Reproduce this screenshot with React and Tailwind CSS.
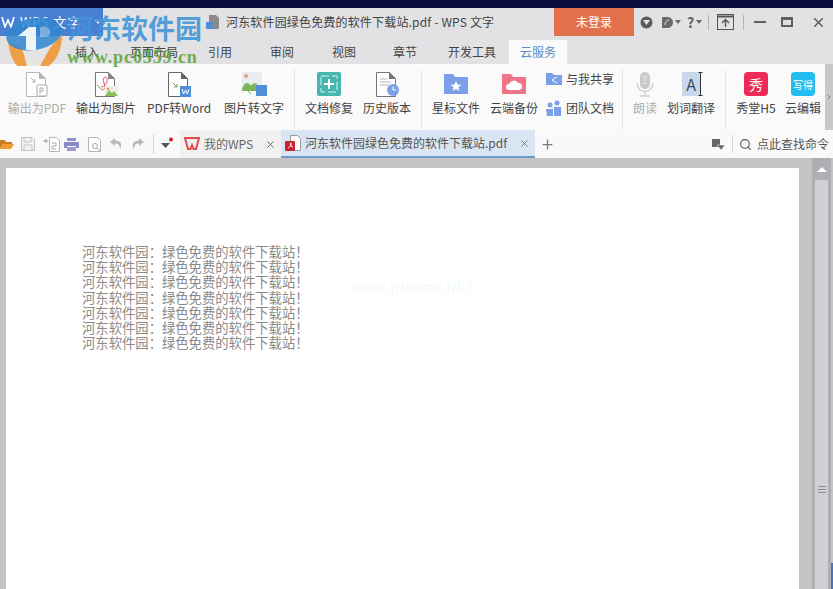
import React from 'react';
import { X, Plus, Search, ChevronRight } from 'lucide-react';

const cjk = { fontFamily: '"Noto Sans CJK SC", "Noto Sans", sans-serif' };

const DocBase = ({ stroke = '#8a8a8a', fold = '#8a8a8a' }) => (
    <>
        <path d="M3.5 1.5h13l6 6v18h-19z" fill="#fff" stroke={stroke} />
        <path d="M16 1l7 7h-7z" fill={fold} />
    </>
);

const WBadge = ({ x = 15, y = 15 }) => (
    <g>
        <rect x={x} y={y} width="11" height="11" fill="#4f8fd8" />
        <path d={`M${x + 2} ${y + 3}l1.6 5 1.9-4 1.9 4 1.6-5`} fill="none" stroke="#fff" strokeWidth="1" />
    </g>
);

const ToPdf = () => (
    <svg width="28" height="26" viewBox="0 0 28 26">
        <DocBase stroke="#b5b5b5" fold="#b5b5b5" />
        <path d="M8 7l4 4m0-3v3H9" stroke="#b0b0b0" fill="none" />
        <rect x="14" y="14" width="10" height="11" rx="1" fill="#fff" stroke="#aaa" />
        <path d="M17 23v-6h3v3h-3" fill="none" stroke="#aaa" />
    </svg>
);

const ToImage = () => (
    <svg width="28" height="26" viewBox="0 0 28 26">
        <DocBase stroke="#777" fold="#888" />
        <path d="M9 16c3 0 7-4 6-8s-5-2-3 4 1 6-3 7" fill="none" stroke="#d9546c" />
        <path d="M5 14l4 4" stroke="#6aa84f" />
        <rect x="13" y="15" width="13" height="10" fill="#e9f2e0" />
        <path d="M13 25l4-6 3 3 2-2 4 5z" fill="#8cbf5a" />
        <circle cx="16" cy="18" r="1.3" fill="#e8a05c" />
    </svg>
);

const ToWord = () => (
    <svg width="28" height="26" viewBox="0 0 28 26">
        <DocBase stroke="#666" fold="#666" />
        <path d="M8 12l4 4m0-3v3H9" stroke="#6aa84f" fill="none" />
        <WBadge />
    </svg>
);

const ImgToText = () => (
    <svg width="30" height="26" viewBox="0 0 30 26">
        <rect x="3" y="1" width="20" height="19" fill="#e8eef0" />
        <circle cx="7" cy="5" r="2" fill="#e39a80" />
        <path d="M3 18c2-7 6-8 9-3 2-4 6-4 9 2v3H3z" fill="#7fb55a" />
        <path d="M8 19l4 4" stroke="#6aa84f" />
        <WBadge x="17" y="14" />
    </svg>
);

const Repair = () => (
    <svg width="26" height="26" viewBox="0 0 26 26">
        <rect x="1" y="1" width="24" height="24" rx="2" fill="#46b7ac" />
        <rect x="5" y="5" width="16" height="16" fill="none" stroke="#d9f3f0" strokeDasharray="8 3" />
        <path d="M13 8v10M8 13h10" stroke="#fff" strokeWidth="2" />
    </svg>
);

const History = () => (
    <svg width="28" height="26" viewBox="0 0 28 26">
        <DocBase stroke="#777" fold="#777" />
        <path d="M7 8h7M7 11h11M7 14h9" stroke="#b5b5b5" />
        <circle cx="20" cy="19" r="6" fill="#7f9fe6" />
        <path d="M20 15.5V19h3" stroke="#fff" fill="none" />
    </svg>
);

const Folder = ({ color, children }) => (
    <svg width="26" height="24" viewBox="0 0 26 24">
        <path d="M1 2h9l2 3h13v17H1z" fill={color} />
        {children}
    </svg>
);

const Mic = () => (
    <svg width="20" height="26" viewBox="0 0 20 26">
        <rect x="5" y="1" width="10" height="17" rx="5" fill="#c9c9c9" />
        <path d="M8 6h4M8 9h4M8 12h4" stroke="#eee" />
        <path d="M2 12c0 11 16 11 16 0M10 20v4M5 25h10" fill="none" stroke="#cfcfcf" strokeWidth="1.5" />
    </svg>
);

const Translate = () => (
    <div className="relative flex h-6 w-[18px] items-center justify-center bg-[#c9d7ea] text-[16px] text-[#3d4a5c]">
        A
        <svg className="absolute -right-[3px] top-0" width="5" height="24" viewBox="0 0 5 24">
            <path d="M0.5 0.5h4M2.5 0.5v23M0.5 23.5h4" stroke="#333" fill="none" />
        </svg>
    </div>
);

const Tile = ({ bg, className, children }) => (
    <div className={`flex h-6 w-6 items-center justify-center rounded-sm text-white ${bg} ${className}`}>{children}</div>
);

const Tool = ({ w, label, muted, icon }) => (
    <div className={`flex shrink-0 flex-col items-center ${w}`}>
        <div className="flex h-[28px] items-center justify-center">{icon}</div>
        <span className={`mt-[2px] whitespace-nowrap text-[12px] leading-4 ${muted ? 'text-[#ababab]' : 'text-[#444]'}`}>
            {label}
        </span>
    </div>
);

const Sep = () => <div className="mt-[4px] h-[59px] w-px shrink-0 bg-[#e2e2e2]" />;

const Bar = () => <div className="h-[15px] w-px bg-[#b4b4b4]" />;

const menu = [
    { label: '插入', w: 'w-[62px]' },
    { label: '页面布局', w: 'w-[72px]' },
    { label: '引用', w: 'w-[60px]' },
    { label: '审阅', w: 'w-[64px]' },
    { label: '视图', w: 'w-[60px]' },
    { label: '章节', w: 'w-[62px]' },
    { label: '开发工具', w: 'w-[72px]' },
];

const lines = Array.from({ length: 7 });

function TitleBar() {
    return (
        <div className="flex h-7 items-center bg-[#e2e2e4]">
            <div className="flex h-full w-[103px] shrink-0 items-center bg-[#4a80d2] text-[13px] text-white">
                <svg className="ml-[1px]" width="14" height="12" viewBox="0 0 14 12">
                    <path d="M1 1l3 10 3-7 3 7 3-10" fill="none" stroke="#fff" strokeWidth="1.6" />
                </svg>
                <span className="ml-[5px] tracking-[0.8px]">WPS 文字</span>
                <svg className="ml-[14px]" width="6" height="4" viewBox="0 0 6 4"><path d="M0 0h6L3 4z" fill="#fff" /></svg>
            </div>
            <svg className="ml-[103px] shrink-0" width="14" height="16" viewBox="0 0 14 16">
                <path d="M3 1h7l3 3v11H3z" fill="#8a8a8a" />
                <rect x="0" y="8" width="7" height="7" fill="#4f8fd8" />
            </svg>
            <span className="ml-[6px] w-[328px] shrink-0 whitespace-nowrap text-[12px] tracking-[0.17px] text-[#444]">
                河东软件园绿色免费的软件下载站.pdf - WPS 文字
            </span>
            <div className="flex h-full w-[80px] shrink-0 items-center justify-center bg-[#e2704c] text-[12px] text-white">
                未登录
            </div>
            <div className="flex flex-1 items-center text-[#606060]">
                <svg className="ml-[6px]" width="13" height="13" viewBox="0 0 13 13">
                    <circle cx="6.5" cy="6.5" r="6" fill="#5a5a5a" />
                    <path d="M3 4l3.5 5L10 4z" fill="#e2e2e4" />
                </svg>
                <svg className="ml-[8px]" width="13" height="13" viewBox="0 0 13 13">
                    <path d="M1 1h5c8 0 8 11 0 11H1z" fill="#6a6a6a" />
                    <path d="M4 9c0-3 2-5 4-5" stroke="#e2e2e4" fill="none" />
                </svg>
                <svg className="ml-[1px]" width="7" height="4" viewBox="0 0 7 4"><path d="M0 0h6L3 4z" fill="#6a6a6a" /></svg>
                <span className="ml-[5px] text-[14px] font-semibold leading-none">?</span>
                <svg className="ml-[2px]" width="7" height="4" viewBox="0 0 7 4"><path d="M0 0h6L3 4z" fill="#6a6a6a" /></svg>
                <div className="ml-[5px]"><Bar /></div>
                <svg className="ml-[8px]" width="17" height="16" viewBox="0 0 17 16">
                    <rect x="0.5" y="0.5" width="16" height="15" fill="none" stroke="#555" />
                    <path d="M1 2.5h15" stroke="#555" strokeWidth="2" />
                    <path d="M8.5 13V6M5 9l3.5-3.5L12 9" fill="none" stroke="#555" strokeWidth="1.4" />
                </svg>
                <div className="ml-[9px]"><Bar /></div>
                <div className="ml-[10px] h-[2px] w-[12px] bg-[#606060]" />
                <div className="ml-[15px] h-[10px] w-[12px] border-2 border-t-[3px] border-[#606060]" />
                <X className="ml-[18px] h-[15px] w-[15px]" strokeWidth={2.5} />
            </div>
        </div>
    );
}

function MenuRow() {
    return (
        <div className="flex h-7 items-end bg-[#e2e2e4] pl-[56px] text-[12px] text-[#444]">
            {menu.map((m) => (
                <div key={m.label} className={`flex h-6 shrink-0 items-center justify-center ${m.w}`}>{m.label}</div>
            ))}
            <div className="ml-[1px] flex h-6 w-[58px] items-center justify-center bg-[#fafafa] text-[#5c8fbf]">云服务</div>
        </div>
    );
}

function Ribbon() {
    return (
        <div className="flex h-[66px] bg-[#fafafa] pl-[2px] pt-[2px]">
            <div className="flex pt-[4px]">
                <Tool w="w-[70px]" label="输出为PDF" muted icon={<ToPdf />} />
                <Tool w="w-[68px]" label="输出为图片" icon={<ToImage />} />
                <Tool w="w-[78px]" label="PDF转Word" icon={<ToWord />} />
                <Tool w="w-[72px]" label="图片转文字" icon={<ImgToText />} />
            </div>
            <div className="w-[4px]" />
            <Sep />
            <div className="flex pl-[5px] pt-[4px]">
                <Tool w="w-[58px]" label="文档修复" icon={<Repair />} />
                <Tool w="w-[58px]" label="历史版本" icon={<History />} />
            </div>
            <div className="w-[5px]" />
            <Sep />
            <div className="flex pl-[5px] pt-[4px]">
                <Tool w="w-[58px]" label="星标文件" icon={<Folder color="#7b9fe8"><path d="M13 9l1.6 3.4 3.6.4-2.7 2.5.8 3.700-3.300-1.900-3.300 1.900.8-3.700-2.700-2.500 3.600-.4z" fill="#fff" /></Folder>} />
                <Tool w="w-[58px]" label="云端备份" icon={<Folder color="#ee7488"><path d="M8 18a3 3 0 010-6 5 5 0 019-1 3.500 3.500 0 011 7z" fill="#fff" /></Folder>} />
            </div>
            <div className="ml-[3px] flex w-[74px] shrink-0 flex-col gap-[13px] pt-[5px] text-[12px] leading-4 text-[#444]">
                <div className="flex items-center gap-[4px]">
                    <svg width="16" height="14" viewBox="0 0 16 14">
                        <path d="M0 1h6l2 2h8v10H0z" fill="#7b9fe8" />
                        <path d="M11 5L6 8l5 3" stroke="#fff" fill="none" />
                    </svg>
                    <span>与我共享</span>
                </div>
                <div className="flex items-center gap-[4px]">
                    <svg width="16" height="16" viewBox="0 0 16 16" fill="#7b9fe8">
                        <circle cx="4" cy="5" r="2.500" />
                        <circle cx="11" cy="3" r="2.500" />
                        <path d="M0 9h7v7H1zM8 7h7v9H8z" />
                    </svg>
                    <span>团队文档</span>
                </div>
            </div>
            <div className="w-[2px]" />
            <Sep />
            <div className="flex pl-[2px] pt-[4px]">
                <Tool w="w-[40px]" label="朗读" muted icon={<Mic />} />
                <Tool w="w-[52px]" label="划词翻译" icon={<Translate />} />
            </div>
            <div className="w-[8px]" />
            <Sep />
            <div className="flex pl-[5px] pt-[4px]">
                <Tool w="w-[50px]" label="秀堂H5" icon={<Tile bg="bg-[#ee2a56]" className="text-[14px]">秀</Tile>} />
                <Tool w="w-[44px]" label="云编辑" icon={<Tile bg="bg-[#23bdf0]" className="text-[10px]">写得</Tile>} />
            </div>
            <div className="-mt-[2px] ml-auto flex h-[66px] w-[8px] shrink-0 items-center justify-center bg-[#c8c8c8]">
                <ChevronRight className="h-2 w-2 text-[#555]" />
            </div>
        </div>
    );
}

function TabBar() {
    return (
        <div className="flex h-7 items-center bg-[#f9f9f9] text-[12px] text-[#555]">
            <svg className="shrink-0" width="14" height="12" viewBox="0 0 14 12">
                <path d="M0 2h5l1 2h6v2H3L0 11z" fill="#c97c22" />
                <path d="M3 6h11l-3 5H0z" fill="#f39a2e" />
            </svg>
            <svg className="ml-[7px] shrink-0" width="14" height="14" viewBox="0 0 14 14">
                <path d="M.5.5h11l2 2v11H.5z" fill="#f3f3f3" stroke="#c4c4c4" />
                <path d="M3 1v4h7V1M3 13V8h8v5" fill="none" stroke="#c4c4c4" />
            </svg>
            <svg className="ml-[8px] shrink-0" width="17" height="15" viewBox="0 0 17 15">
                <path d="M6.500.5h7l3 3v11h-10z" fill="#fff" stroke="#b5b5b5" />
                <path d="M0 4h5M3 2v4" stroke="#999" />
                <path d="M9 6h4v3H9v3h4" fill="none" stroke="#aaa" />
            </svg>
            <svg className="ml-[4px] shrink-0" width="15" height="13" viewBox="0 0 15 13">
                <rect x="3" y="0" width="9" height="3" fill="#9494c9" />
                <path d="M0 4h15v6h-3V8H3v2H0z" fill="#8a8ac4" />
                <rect x="3" y="9" width="9" height="4" fill="#9c9ccf" />
            </svg>
            <svg className="ml-[9px] shrink-0" width="14" height="15" viewBox="0 0 14 15">
                <path d="M.5.500h9l3 3v11H.5z" fill="#fff" stroke="#b5b5b5" />
                <circle cx="7" cy="9" r="2.500" fill="none" stroke="#9aa" />
                <path d="M9 11l3 3" stroke="#9aa" />
            </svg>
            <svg className="ml-[8px] shrink-0" width="13" height="12" viewBox="0 0 13 12">
                <path d="M5 0L0 4l5 4V5.500c3 0 5 1 5 6 3-6 0-9-5-9z" fill="#b8b8b8" />
            </svg>
            <svg className="ml-[8px] shrink-0" width="13" height="12" viewBox="0 0 13 12">
                <path d="M8 0l5 4-5 4V5.500c-3 0-5 1-5 6-3-6 0-9 5-9z" fill="#b8b8b8" />
            </svg>
            <div className="ml-[9px] h-[20px] w-px shrink-0 bg-[#d5d5d5]" />
            <svg className="ml-[6px] shrink-0" width="14" height="14" viewBox="0 0 14 14">
                <path d="M1 6h9L5.500 11z" fill="#555" />
                <circle cx="11" cy="2.500" r="2" fill="#d8182c" />
            </svg>
            <div className="ml-[6px] flex h-full w-[101px] shrink-0 items-center bg-[#f1f1f1] pl-[4px]">
                <svg width="16" height="14" viewBox="0 0 16 14">
                    <path d="M1 1h14l-3 11H9.500L8 8l-1.500 4H4z" fill="none" stroke="#e04c4c" strokeWidth="2" />
                </svg>
                <span className="ml-[4px] w-[61px] text-[#666]">我的WPS</span>
                <X className="h-[11px] w-[11px] text-[#333]" strokeWidth={1.500} />
            </div>
            <div className="flex h-full w-[254px] shrink-0 items-center border-b-2 border-[#6d9bcc] bg-[#d9e5f3] pl-[4px]">
                <svg className="shrink-0" width="16" height="16" viewBox="0 0 16 16">
                    <path d="M5.500.500h7l3 3v12h-10z" fill="#fff" stroke="#999" />
                    <rect x="0" y="6" width="10" height="10" rx="1" fill="#c8232c" />
                    <path d="M3 13c2-1 4-4 3-5s-1 4 2 4" stroke="#fff" fill="none" />
                </svg>
                <span className="ml-[4px] w-[214px] shrink-0 whitespace-nowrap text-[#555]">河东软件园绿色免费的软件下载站.pdf</span>
                <X className="h-[11px] w-[11px] text-[#555]" strokeWidth={1.500} />
            </div>
            <Plus className="ml-[5px] h-[15px] w-[15px] shrink-0 text-[#777]" strokeWidth={2} />
            <div className="ml-auto flex items-center pr-[4px]">
                <svg width="13" height="11" viewBox="0 0 13 11">
                    <rect width="8" height="8" fill="#666" />
                    <path d="M5 6h8l-4 5z" fill="#666" stroke="#f9f9f9" strokeWidth="0.500" />
                </svg>
                <div className="ml-[7px] h-[18px] w-px bg-[#d5d5d5]" />
                <Search className="ml-[6px] h-[13px] w-[13px] text-[#555]" />
                <span className="ml-[5px] whitespace-nowrap text-[#555]">点此查找命令</span>
            </div>
        </div>
    );
}

function Scrollbar() {
    return (
        <div className="flex h-full w-[21px] shrink-0">
            <div className="w-[3px] bg-[#adadb2]" />
            <div className="flex w-[13px] flex-col bg-[#aeaeb4]">
                <div className="flex h-[22px] items-center justify-center">
                    <div className="h-0 w-0 border-x-[5px] border-b-[5px] border-x-transparent border-b-white" />
                </div>
                <div className="flex flex-1 items-center justify-center bg-[#d0d0d6] pt-[210px]">
                    <div className="flex w-[8px] flex-col gap-[2px]">
                        <div className="h-px bg-[#8c8c8c]" />
                        <div className="h-px bg-[#8c8c8c]" />
                        <div className="h-px bg-[#8c8c8c]" />
                    </div>
                </div>
            </div>
            <div className="w-[3px] bg-[#adadb2]" />
            <div className="w-[2px]" />
        </div>
    );
}

function Watermark() {
    return (
        <div className="pointer-events-none absolute left-0 top-[8px] flex">
            <svg width="64" height="58" viewBox="0 0 64 58">
                <path d="M22 40h26l-3 18H25z" fill="#e6e6e6" fillOpacity="0.8" />
                <path d="M8 34c2 14 6 22 12 26l7-2-5-18z" fill="#ef9a3c" fillOpacity="0.95" />
                <path d="M62 26c0 16-6 28-16 34l-6-2 10-18z" fill="#ef9a3c" fillOpacity="0.95" />
                <ellipse cx="34" cy="26" rx="28" ry="16" transform="rotate(-10 34 26)" fill="#2f86d0" fillOpacity="0.85" />
                <path d="M18 28l11-9h7v23H26V28z" fill="#fff" fillOpacity="0.9" />
                <path d="M40 19h5c7 0 7 10 0 10h-5z" fill="#fff" fillOpacity="0.35" />
            </svg>
            <div className="ml-[3px]">
                <div className="mt-[2px] whitespace-nowrap text-[27px] font-bold leading-[36px] text-[#3f94d8]/90">河东软件园</div>
                <div className="mt-[1px] whitespace-nowrap text-[18px] font-bold leading-[20px] tracking-[0.9px] text-[#5da53a]/90" style={{ fontFamily: '"Liberation Serif", serif' }}>
                    www.pc0359.cn
                </div>
            </div>
        </div>
    );
}

function App() {
    return (
        <div className="relative h-[589px] w-[833px] overflow-hidden bg-[#c4c4c4]" style={cjk}>
            <div className="h-2 bg-[#0c0c3c]" />
            <TitleBar />
            <MenuRow />
            <Ribbon />
            <TabBar />
            <div className="flex h-[431px] pl-[6px]">
                <div className="mt-[10px] w-[793px] shrink-0 bg-white pl-[76px] pt-[76px] text-[13.33px] leading-[15.17px] text-[#8a8a8a]">
                    {lines.map((_, i) => (
                        <div key={i} className="whitespace-nowrap">河东软件园：绿色免费的软件下载站！</div>
                    ))}
                </div>
                <div className="w-[13px] shrink-0" />
                <Scrollbar />
            </div>
            <div className="absolute left-[351px] top-[276px] text-[14px] tracking-[0.6px] text-[#f2f9fb]">www.pHome.NET</div>
            <div className="absolute bottom-0 right-0 h-[26px] w-[2px] bg-[#4a72b8]" />
            <Watermark />
        </div>
    );
}

export default App;
